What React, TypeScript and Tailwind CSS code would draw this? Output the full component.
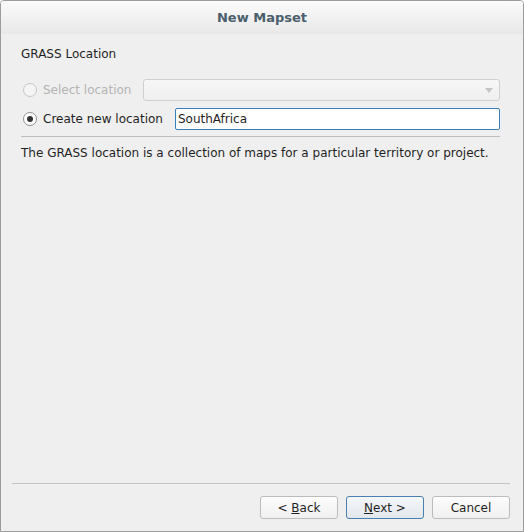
export default function App() {
  return (
    <div className="w-[524px] h-[532px] flex flex-col bg-[#efefef] border border-[#9c9c9c] rounded-t-[4px] overflow-hidden font-['DejaVu_Sans',sans-serif] text-[12px] text-[#1f1f1f]">
      {/* title bar */}
      <div className="h-[33px] flex items-center justify-center bg-gradient-to-b from-[#fbfbfb] to-[#e8e8e8]">
        <span className="font-bold text-[13px] text-[#4b5e6c]">New Mapset</span>
      </div>

      <div className="flex-1 flex flex-col pl-[20px] pr-[23px] pt-[12px]">
        <div className="h-[16px] leading-[16px]">GRASS Location</div>

        <div className="mt-[17px] flex items-center gap-[12px] h-[22px]">
          <label className="flex items-center gap-[6px] text-[#b4b4b4]">
            <span className="w-[14px] h-[14px] ml-[2px] rounded-full border border-[#c6c6c6] bg-[#f4f4f4]" />
            <span>Select location</span>
          </label>
          <div className="flex-1 h-[22px] rounded-[3px] border border-[#cfcfcf] bg-gradient-to-b from-[#f7f7f7] to-[#efefef] flex items-center justify-end pr-[6px]">
            <svg width="8" height="5" viewBox="0 0 8 5">
              <path d="M0 0h8L4 5z" fill="#c4c4c4" />
            </svg>
          </div>
        </div>

        <div className="mt-[7px] flex items-center gap-[12px] h-[22px]">
          <label className="flex items-center gap-[6px]">
            <span className="w-[14px] h-[14px] ml-[2px] rounded-full border border-[#8e8e8e] bg-white flex items-center justify-center">
              <span className="w-[6px] h-[6px] rounded-full bg-[#333]" />
            </span>
            <span>Create new location</span>
          </label>
          <div className="flex-1 h-[22px] rounded-[2px] border border-[#3b7db5] bg-white flex items-center pl-[2px]">
            SouthAfrica
          </div>
        </div>

        <div className="mt-[6px] h-px bg-[#bdbdbd]" />

        <div className="mt-[8px] h-[16px] leading-[16px]">
          The GRASS location is a collection of maps for a particular territory or project.
        </div>
      </div>

      <div className="pl-[11px] pr-[13px] pb-[12px]">
        <div className="h-px bg-[#c4c4c4]" />
        <div className="mt-[12px] flex justify-end gap-[8px]">
          <button className="w-[78px] h-[23px] rounded-[3px] border border-[#bcbcbc] bg-gradient-to-b from-[#fcfcfc] to-[#f0f0f0]">
            &lt; <span className="underline">B</span>ack
          </button>
          <button className="w-[78px] h-[23px] rounded-[3px] border border-[#4a7fae] bg-gradient-to-b from-[#f5f7f9] to-[#e2e7ec]">
            <span className="underline">N</span>ext &gt;
          </button>
          <button className="w-[78px] h-[23px] rounded-[3px] border border-[#bcbcbc] bg-gradient-to-b from-[#fcfcfc] to-[#f0f0f0]">
            Cancel
          </button>
        </div>
      </div>
    </div>
  );
}
